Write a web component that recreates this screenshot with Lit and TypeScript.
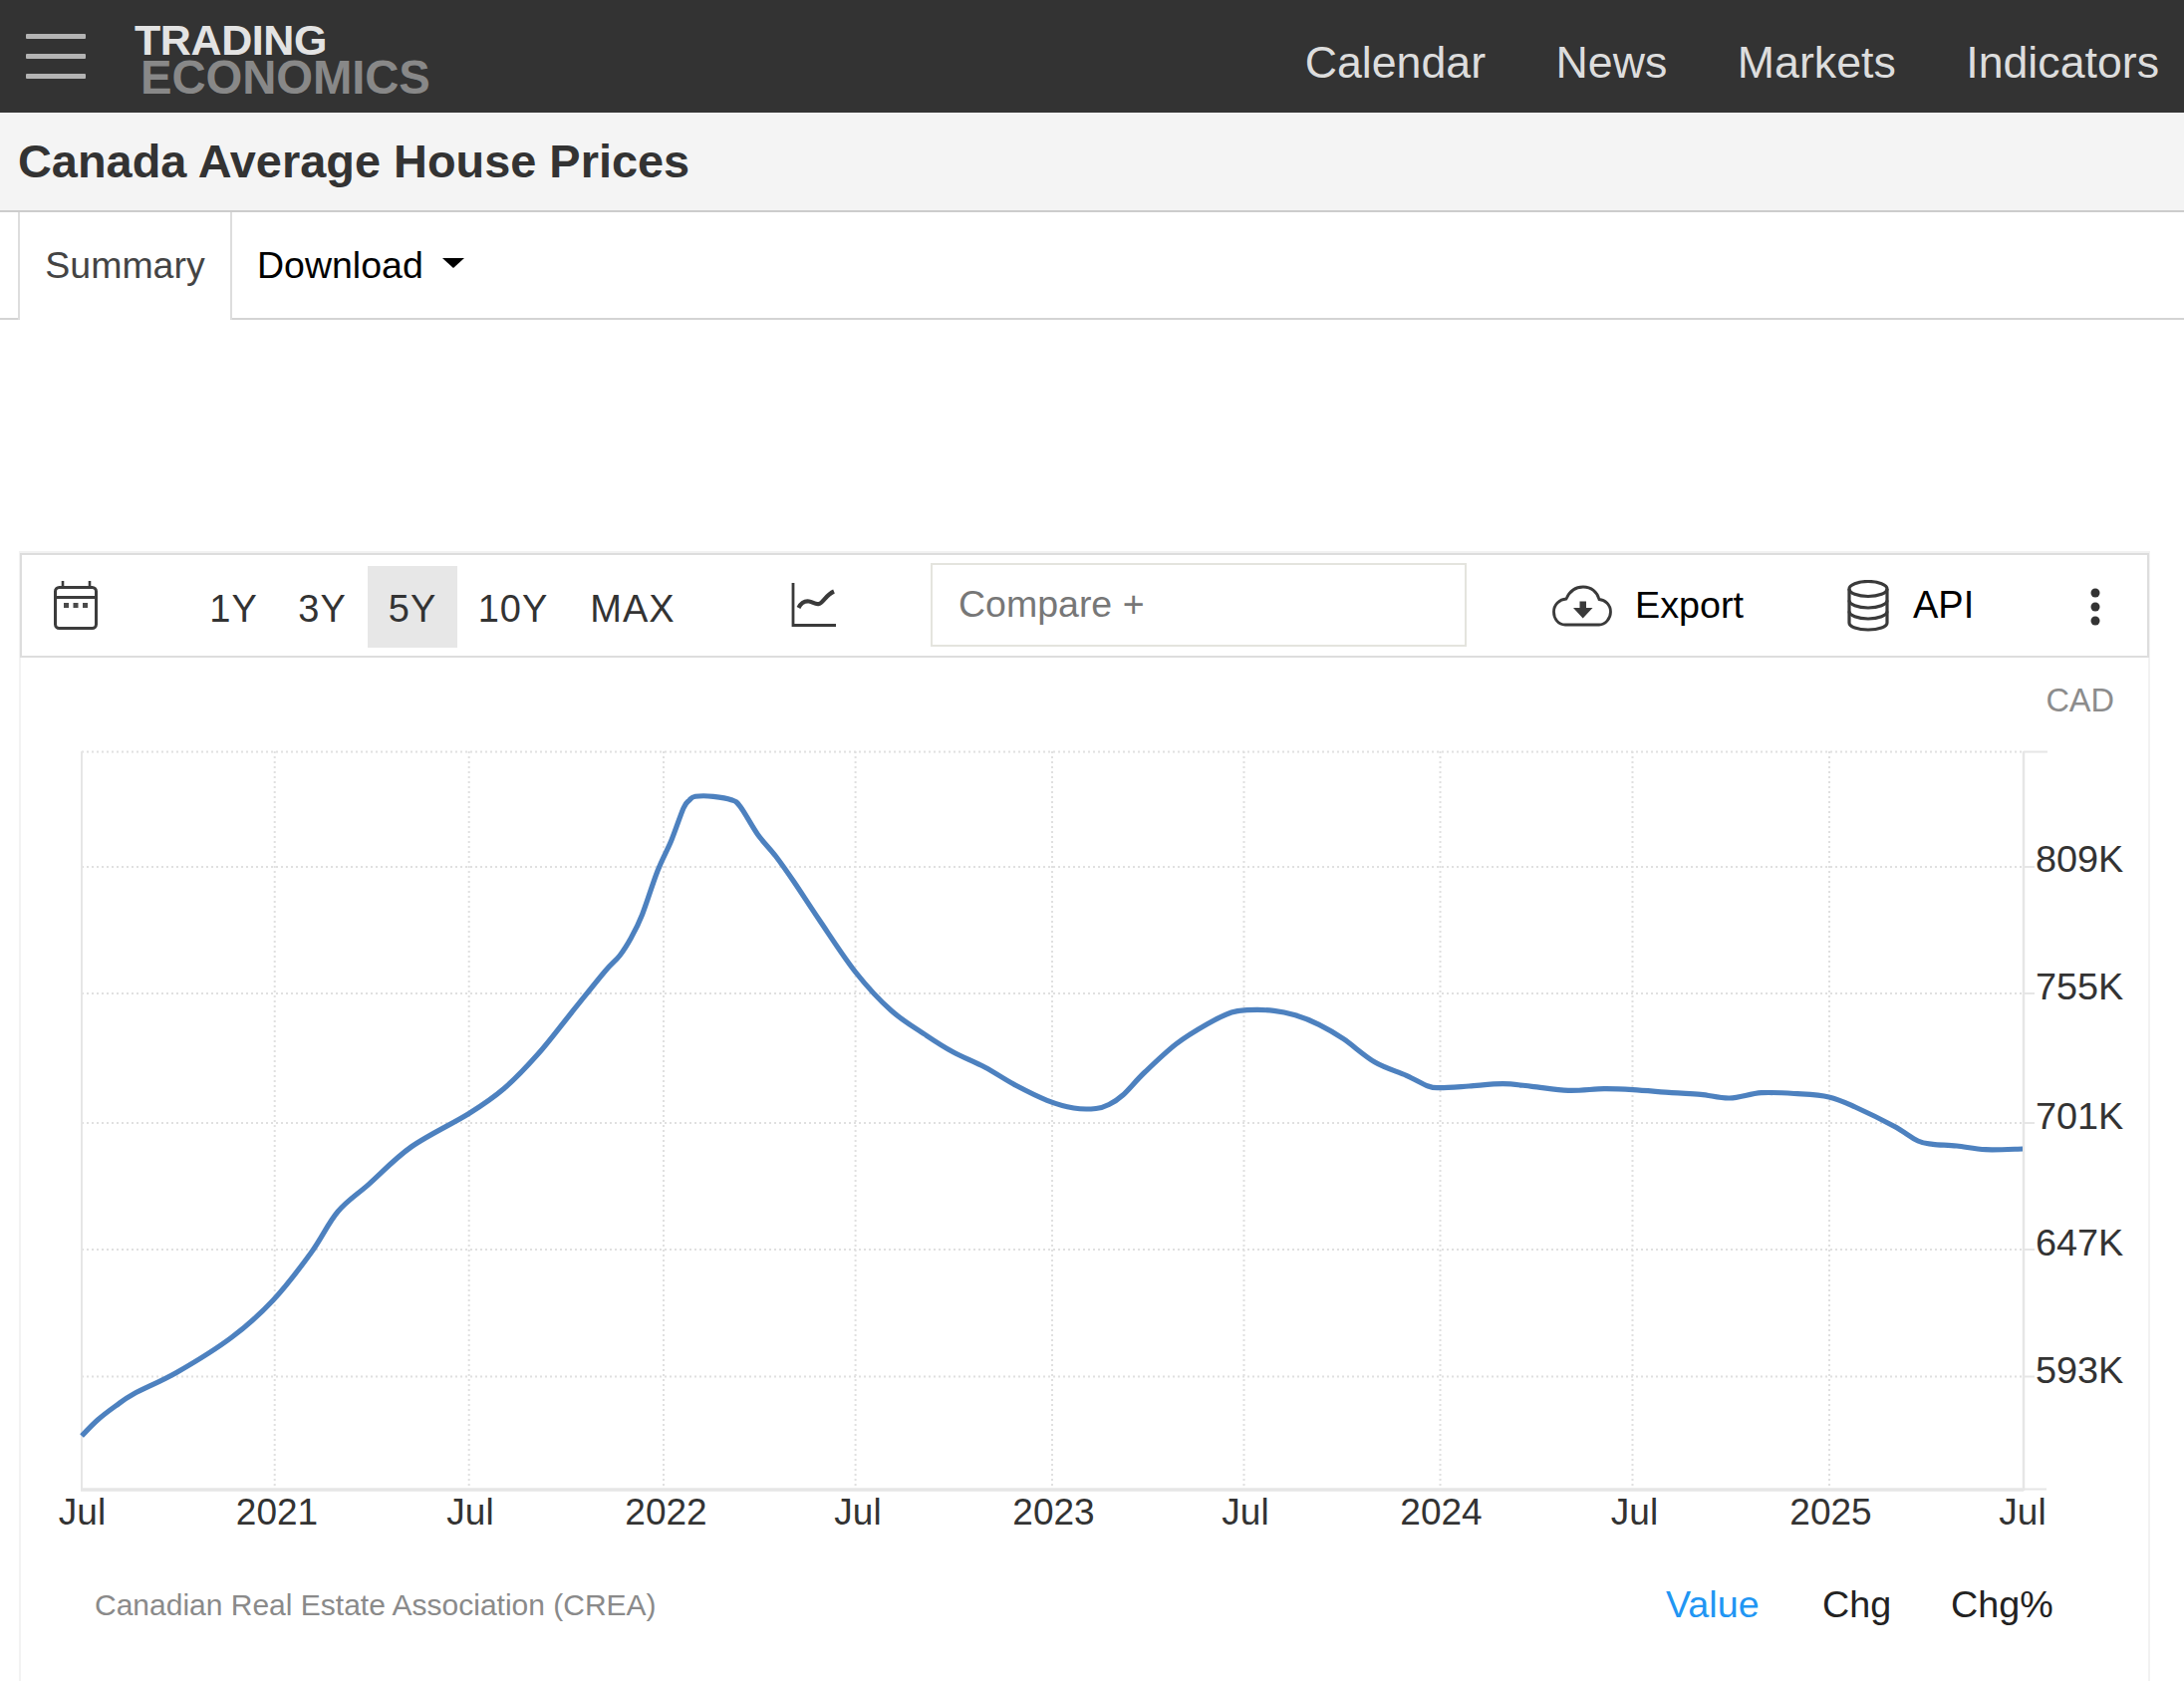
import { LitElement, html, css, svg } from "lit";
import { customElement } from "lit/decorators.js";

const P: [number, number][] = [
  [82,1440],[98,1424],[116,1410],[134,1398],[178,1376],[232,1341.5],[274,1304],[312,1256.5],[339,1215],[370,1187.6],
  [412.7,1150],[470.7,1116.5],[506.4,1091],[540,1056.8],[573.4,1015.5],[607,974],[622,958],[633.5,940],[644.6,916.7],[660,873],
  [674,842],[686,810],[692,802],[698,798.3],[716,798.3],[734,801.7],[742.9,808.3],[760.7,836.7],[778.6,858.3],[796.4,883.3],[823,923.3],
  [859,975],[894.6,1013.3],[930,1038.3],[957,1055],[988.4,1070],[1019.6,1088.3],[1050.9,1103.3],[1077.7,1111],[1100,1111.5],[1113,1107.5],[1127,1098],
  [1149,1075],[1180.4,1046.7],[1211.6,1026.7],[1236,1015],[1251.8,1012.7],[1278.6,1013.3],[1300,1017.8],[1324,1027.3],[1348.5,1041.7],[1380,1065],
  [1411.5,1078.3],[1433.3,1089],[1445.4,1090.7],[1474.5,1089],[1508.4,1086.7],[1537.5,1089.3],[1574,1093.3],[1610,1091.7],[1639,1092.7],[1678,1095.7],
  [1707,1097.3],[1736,1101],[1767.8,1095.7],[1804,1096.7],[1835.6,1100],[1862,1110],[1901,1129.3],[1925,1144],[1940,1147.3],[1964,1149],[1993,1152.7],[2030,1152],
];

function smooth(pts: [number, number][]): string {
  let d = `M${pts[0][0]} ${pts[0][1]}`;
  for (let i = 0; i < pts.length - 1; i++) {
    const p0 = pts[Math.max(0, i - 1)], p1 = pts[i], p2 = pts[i + 1], p3 = pts[Math.min(pts.length - 1, i + 2)];
    const c1x = p1[0] + (p2[0] - p0[0]) / 6, c1y = p1[1] + (p2[1] - p0[1]) / 6;
    const c2x = p2[0] - (p3[0] - p1[0]) / 6, c2y = p2[1] - (p3[1] - p1[1]) / 6;
    d += `C${c1x.toFixed(1)} ${c1y.toFixed(1)} ${c2x.toFixed(1)} ${c2y.toFixed(1)} ${p2[0]} ${p2[1]}`;
  }
  return d;
}

const gridY = [869, 996, 1126, 1253, 1380.5];
const gridX = [275.7, 470.7, 666, 858.6, 1056, 1248.5, 1445.5, 1638.5, 1836];
const yLabels: [string, number][] = [["809K", 874], ["755K", 1002], ["701K", 1132], ["647K", 1259], ["593K", 1387]];
const xLabels: [string, number][] = [["Jul", 82.5], ["2021", 278], ["Jul", 472], ["2022", 668.5], ["Jul", 861], ["2023", 1057.5], ["Jul", 1250], ["2024", 1446.5], ["Jul", 1640.5], ["2025", 1837.5], ["Jul", 2030]];

@customElement("app-root")
export class AppRoot extends LitElement {
  static styles = css`
    :host { display: block; width: 100%; font-family: "Liberation Sans", Arial, sans-serif; background: #fff; }
    .top { height: 113px; background: #333; display: flex; align-items: center; }
    .burger { width: 60px; margin-left: 26px; display: flex; flex-direction: column; gap: 15px; }
    .burger i { display: block; height: 5px; background: #b4b4b4; border-radius: 1px; }
    .logo { margin-left: 49px; display: flex; flex-direction: column; font-weight: 700; line-height: 1; margin-top: 4px; }
    .logo .a { color: #e3e3e3; font-size: 43px; height: 37px; line-height: 35px; letter-spacing: -0.4px; }
    .logo .b { color: #888; font-size: 47.3px; height: 35px; line-height: 35px; margin-left: 6px; letter-spacing: -0.1px; }
    nav { margin-left: auto; margin-right: 25px; display: flex; gap: 70.5px; font-size: 44.7px; color: #ddd; margin-top: 12px; }
    .title { height: 100px; box-sizing: border-box; background: #f4f4f4; border-bottom: 2px solid #ccc; padding-left: 18px; display: flex; align-items: center; }
    h1 { margin: 0; font-size: 46.9px; font-weight: 700; color: #333; }
    .tabs { height: 108px; box-sizing: border-box; border-bottom: 2px solid #d4d4d4; display: flex; padding-left: 18px; font-size: 37.5px; }
    .tab { width: 215px; height: 108px; box-sizing: border-box; border: solid #ddd; border-width: 0 2px; background: #fff; color: #444; display: flex; align-items: center; justify-content: center; padding-bottom: 2px; }
    .dl { margin-left: 25px; display: flex; align-items: center; color: #000; }
    .caret { width: 0; height: 0; margin-left: 19px; margin-bottom: 4px; border-style: solid; border-width: 10px 11px 0; border-color: #000 transparent transparent; }
    .panel { margin: 232px 34px 0 19px; border: solid #f2f2f2; border-width: 2px 2px 0; height: 1134px; box-sizing: border-box; display: flex; flex-direction: column; }
    .bar { height: 105px; box-sizing: border-box; border: 2px solid #ddd; margin: 0 -1px; display: flex; align-items: center; position: relative; font-size: 38px; color: #333; }
    .cal { margin-left: 31px; width: 46px; height: 52px; }
    .ranges { margin-left: 92px; margin-top: 2px; display: flex; align-items: center; letter-spacing: 1px; }
    .ranges span { height: 82px; display: flex; align-items: center; justify-content: center; padding-top: 6px; box-sizing: border-box; }
    .ranges .r1 { width: 87px; }
    .ranges .r3 { width: 87px; margin-left: 2px; }
    .ranges .on { width: 90px; margin-left: 2px; background: #e7e7e7; }
    .ranges .r10 { width: 112px; }
    .ranges .max { width: 114px; margin-left: 7px; }
    .lineicon { margin-left: 101px; width: 48px; height: 46px; margin-top: -4px; }
    .compare { margin-left: 93px; width: 538px; height: 84px; box-sizing: border-box; border: 2px solid #e4e4de; display: flex; align-items: center; padding-left: 26px; color: #777; font-size: 37.5px; margin-top: -2px; }
    .item { display: flex; align-items: center; color: #000; }
    .export { margin-left: 86px; }
    .export span { margin-left: 23px; font-size: 37.7px; }
    .api { margin-left: 104px; }
    .api span { margin-left: 24px; }
    .dots { position: absolute; right: 46px; top: 32px; width: 12px; height: 40px; }
    .plot { display: block; width: 2135px; height: 1027px; }
  `;

  render() {
    return html`
      <div class="top">
        <div class="burger"><i></i><i></i><i></i></div>
        <div class="logo"><span class="a">TRADING</span><span class="b">ECONOMICS</span></div>
        <nav><span>Calendar</span><span>News</span><span>Markets</span><span>Indicators</span></nav>
      </div>
      <div class="title"><h1>Canada Average House Prices</h1></div>
      <div class="tabs">
        <div class="tab">Summary</div>
        <div class="dl">Download<span class="caret"></span></div>
      </div>
      <div class="panel">
        <div class="bar">
          <svg class="cal" viewBox="0 0 46 52" fill="none" stroke="#3c3c3c" stroke-width="3">
            <rect x="2.500" y="7.500" width="41" height="41" rx="4"></rect>
            <path d="M2.500 17.500H43.500"></path>
            <path d="M10 1V7M37 1V7" stroke-width="2.600"></path>
            <path d="M11 23h5v5h-5zM20.500 23h5v5h-5zM30 23h5v5h-5z" fill="#4a4a4a" stroke="none"></path>
          </svg>
          <div class="ranges">
            <span class="r1">1Y</span><span class="r3">3Y</span><span class="on">5Y</span><span class="r10">10Y</span><span class="max">MAX</span>
          </div>
          <svg class="lineicon" viewBox="0 0 48 46" fill="none" stroke="#3a3a3a">
            <path d="M3 2V44.500H46" stroke-width="2.800"></path>
            <path d="M8.500 27C11 22 15 20 19 20.500S25 24 29 23S36 14 44 10.500" stroke-width="4.200"></path>
          </svg>
          <div class="compare">Compare +</div>
          <div class="item export">
            <svg width="60" height="42" viewBox="0 0 60 42" fill="none" stroke="#3a3a3a" stroke-width="2.800">
              <path d="M13 40C6 40 1.500 34 1.500 27C1.500 20 7 14.500 14 14C17 7 23 2 31 2C39 2 45 7 47 14.500C53 15 58.500 20 58.500 27C58.500 34 53 40 47 40Z"></path>
              <path d="M27.500 16.500H34V23H40.500L30.700 33.500L21 23H27.500Z" fill="#3a3a3a" stroke="none"></path>
            </svg>
            <span>Export</span>
          </div>
          <div class="item api">
            <svg width="42" height="52" viewBox="0 0 42 52" fill="none" stroke="#3a3a3a" stroke-width="3.200">
              <ellipse cx="21" cy="9" rx="19" ry="7.500"></ellipse>
              <path d="M2 9V43C2 47 10.500 50 21 50S40 47 40 43V9"></path>
              <path d="M2 20.500C2 24.500 10.500 28 21 28S40 24.500 40 20.500M2 31.500C2 35.500 10.500 39 21 39S40 35.500 40 31.500"></path>
            </svg>
            <span>API</span>
          </div>
          <svg class="dots" viewBox="0 0 12 40" fill="#333"><circle cx="6" cy="6" r="4.500"></circle><circle cx="6" cy="20" r="4.500"></circle><circle cx="6" cy="34" r="4.500"></circle></svg>
        </div>
        ${this.plot()}
      </div>
    `;
  }

  plot() {
    // the svg's origin sits at page (21, 659); its viewBox keeps page coordinates
    return svg`
      <svg class="plot" viewBox="21 659 2135 1027" xmlns="http://www.w3.org/2000/svg" font-family="Liberation Sans, Arial, sans-serif">
        <g stroke="#e0e0e0" stroke-width="2" stroke-dasharray="2 3" fill="none">
          <path d="M82 753.500H2031"></path>
          ${gridY.map((y) => svg`<path d="M82 ${y}H2031"></path>`)}
          ${gridX.map((x) => svg`<path d="M${x} 753V1493"></path>`)}
        </g>
        <g stroke="#e6e6e6" fill="none">
          <path d="M82 753V1494" stroke-width="2"></path>
          <path d="M81 1494H2031" stroke-width="3.500"></path>
          <path d="M2031 753V1495" stroke-width="2.500"></path>
          <path d="M2031 1493.500H2054M2031 753.500H2055" stroke-width="2"></path>
          ${gridY.map((y) => svg`<path d="M2031 ${y}H2042" stroke-width="2"></path>`)}
        </g>
        <path d="${smooth(P)}" fill="none" stroke="#4d81bf" stroke-width="5.200" stroke-linejoin="round"></path>
        <text x="2122" y="713" text-anchor="end" font-size="32.500" fill="#8c8c8c">CAD</text>
        <g font-size="37.800" fill="#333">
          ${yLabels.map(([t, y]) => svg`<text x="2043" y="${y}">${t}</text>`)}
        </g>
        <g font-size="37" fill="#333" text-anchor="middle">
          ${xLabels.map(([t, x]) => svg`<text x="${x}" y="1529">${t}</text>`)}
        </g>
        <text x="95" y="1620" font-size="30" fill="#8a8a8a">Canadian Real Estate Association (CREA)</text>
        <g font-size="37.700" fill="#222">
          <text x="1672" y="1622" fill="#2196f3">Value</text>
          <text x="1829" y="1622">Chg</text>
          <text x="1958" y="1622">Chg%</text>
        </g>
      </svg>
    `;
  }
}
